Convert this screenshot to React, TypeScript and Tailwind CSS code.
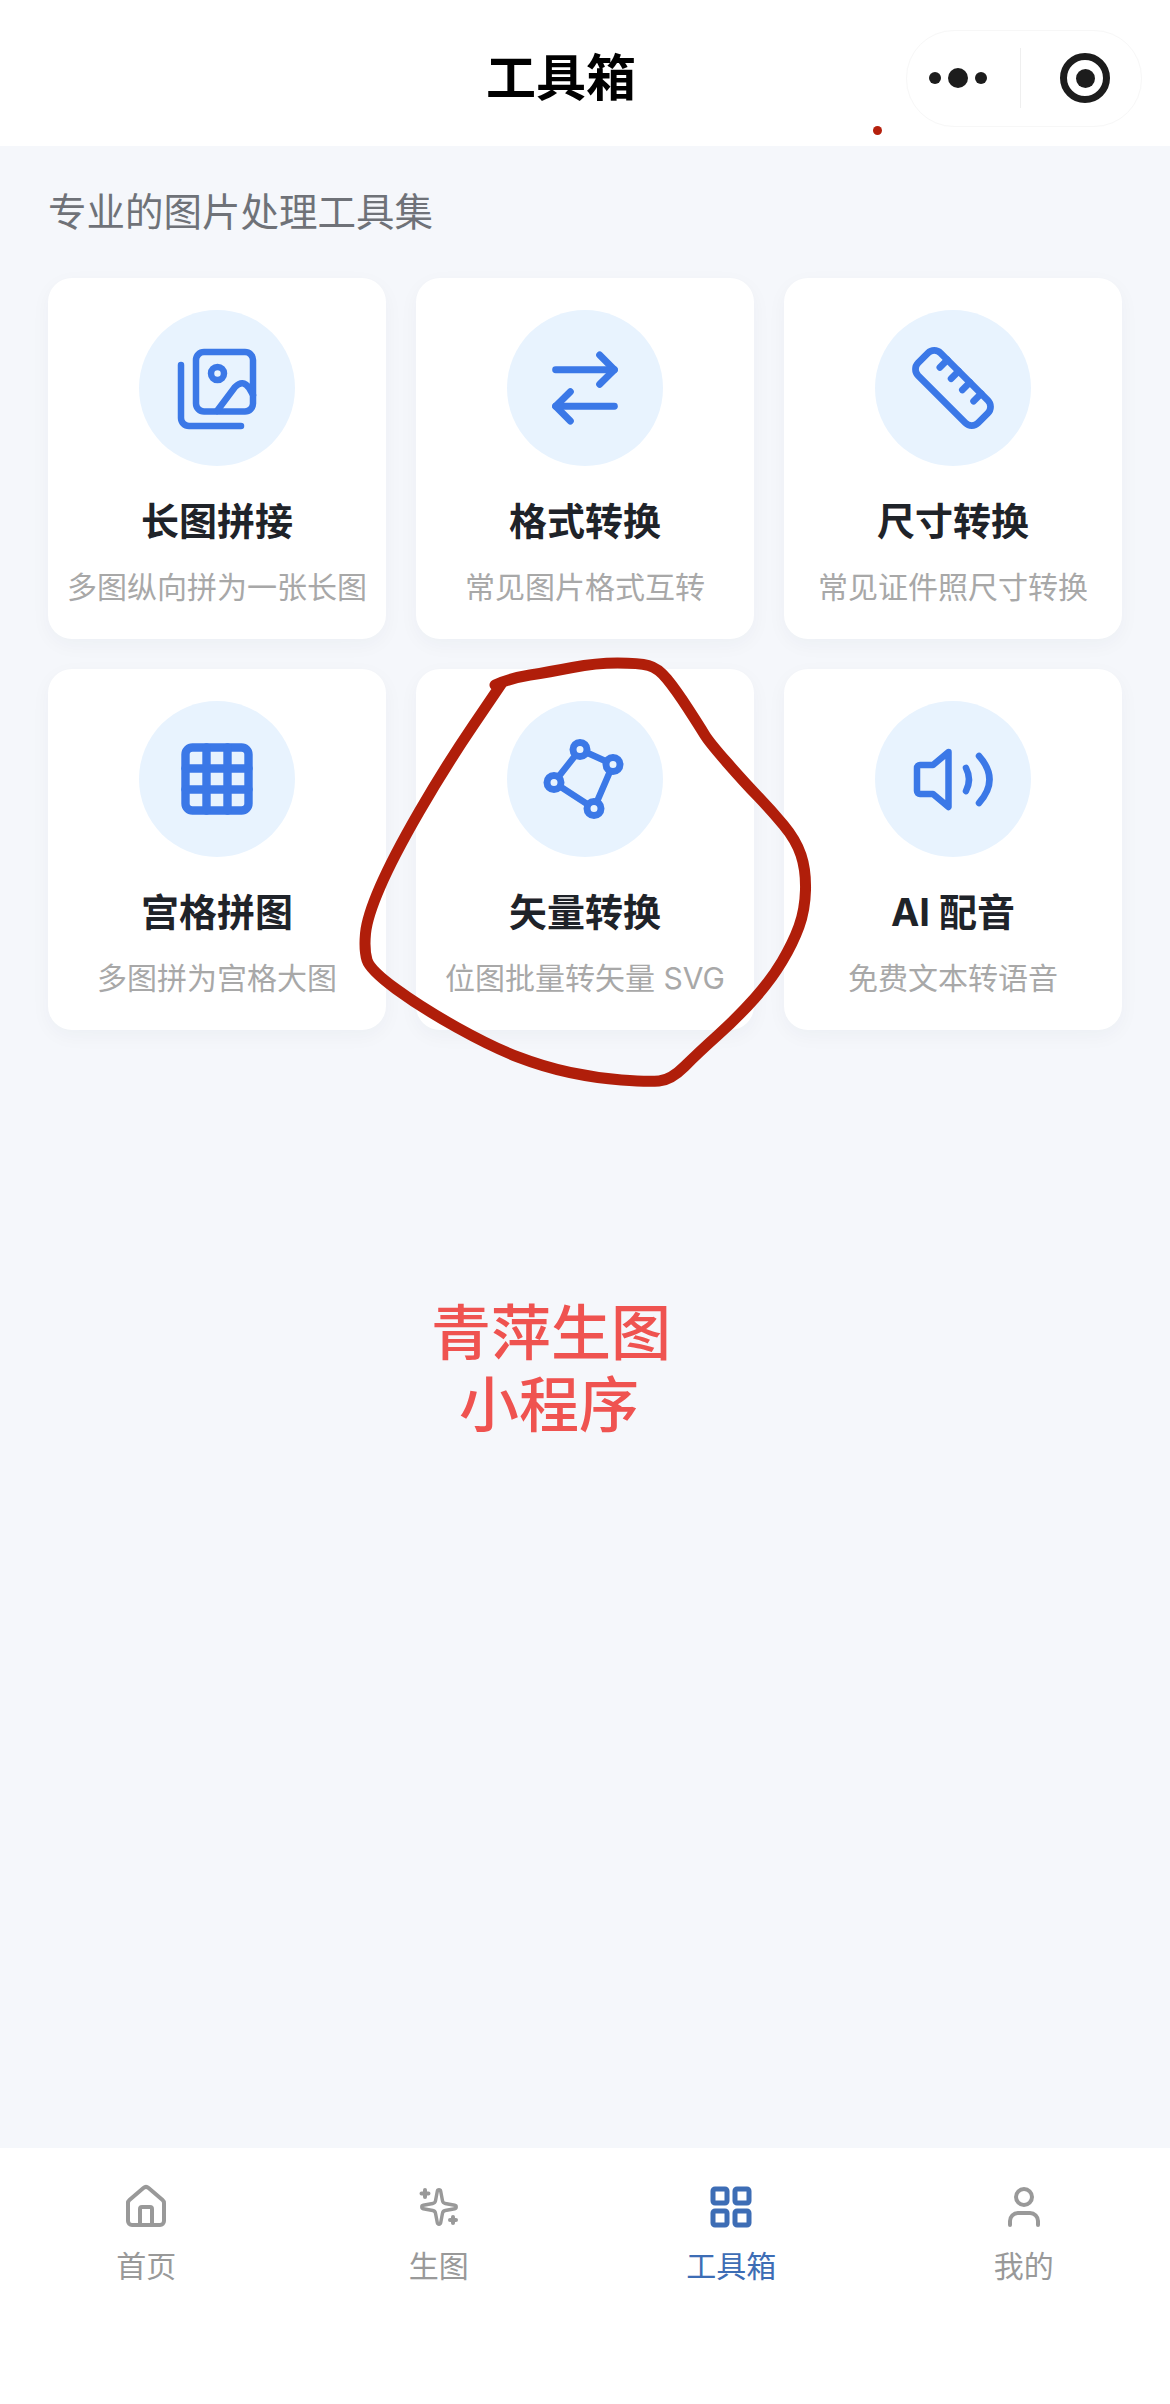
import { ArrowRightLeft, Grid3x3, House, LayoutGrid, Ruler, User } from "lucide-react";
import type { ReactNode } from "react";

const circlePoints: [number, number][] = [
  [495, 685], [511, 678], [549, 672], [596, 663], [639, 663], [658, 668], [676, 690], [700, 727], [709, 742], [745, 783],
  [771, 810], [796, 840], [806, 870], [805, 910], [793, 943], [771, 980], [738, 1017], [698, 1053], [671, 1080], [647, 1082],
  [596, 1078], [544, 1067], [492, 1047], [422, 1008], [370, 970], [364, 950], [367, 917], [393, 857], [445, 767], [502, 683],
];

function smooth(points: [number, number][]) {
  let d = `M${points[0][0]} ${points[0][1]}`;
  for (let i = 1; i < points.length - 1; i++) {
    const [x, y] = points[i];
    const [nx, ny] = points[i + 1];
    d += ` Q${x} ${y} ${(x + nx) / 2} ${(y + ny) / 2}`;
  }
  const last = points[points.length - 1];
  return `${d} L${last[0]} ${last[1]}`;
}

function StackIcon() {
  return (
    <svg width="84" height="84" viewBox="0 0 84 84" fill="none" stroke="#3b78e7" strokeWidth="6.500" strokeLinecap="round" strokeLinejoin="round">
      <rect x="21" y="6" width="57" height="59.500" rx="8" />
      <path d="M6 19v53a8 8 0 0 0 8 8h52" />
      <circle cx="42.500" cy="27.500" r="6.500" />
      <path d="M42 65 60 41q8-8 14 1l4 7" />
    </svg>
  );
}

function VectorIcon() {
  const nodes = [[37, 12.5], [70, 27.5], [51, 71.5], [11, 45.5]];
  return (
    <svg width="84" height="84" viewBox="0 0 84 84" fill="none" stroke="#3b78e7" strokeWidth="7">
      <path d="M37 12.5 70 27.5 51 71.5 11 45.5Z" strokeWidth="6.5" strokeLinejoin="round" />
      {nodes.map(([cx, cy]) => (
        <circle key={cx} cx={cx} cy={cy} r="7" fill="#e8f3fe" />
      ))}
    </svg>
  );
}

function SpeakerIcon() {
  return (
    <svg width="84" height="84" viewBox="0 0 84 84" fill="none" stroke="#3b78e7" strokeWidth="6.5" strokeLinecap="round" strokeLinejoin="round">
      <path d="M37.5 15 22 28H9a3 3 0 0 0-3 3v23a3 3 0 0 0 3 3h13l15.500 13Z" />
      <path d="M55 31Q61 42.500 55 54" />
      <path d="M68 19Q89 42.500 68 66" />
    </svg>
  );
}

function SparkIcon() {
  return (
    <svg width="48" height="48" viewBox="0 0 24 24" fill="none" stroke="#999999" strokeWidth="2" strokeLinecap="round" strokeLinejoin="round">
      <path d="M11.017 2.814a1 1 0 0 1 1.966 0l1.051 5.558a2 2 0 0 0 1.594 1.594l5.558 1.051a1 1 0 0 1 0 1.966l-5.558 1.051a2 2 0 0 0-1.594 1.594l-1.051 5.558a1 1 0 0 1-1.966 0l-1.051-5.558a2 2 0 0 0-1.594-1.594l-5.558-1.051a1 1 0 0 1 0-1.966l5.558-1.051a2 2 0 0 0 1.594-1.594z" transform="translate(12 12) scale(0.86) translate(-12 -12)" />
      <path d="M5 3.500v3.500M3.250 5.250h3.500M19 17v3M17.500 18.500h3" />
    </svg>
  );
}

const tools: { icon: ReactNode; title: string; desc: string }[] = [
  { icon: <StackIcon />, title: "长图拼接", desc: "多图纵向拼为一张长图" },
  { icon: <ArrowRightLeft size={88} color="#3b78e7" strokeWidth={1.9} />, title: "格式转换", desc: "常见图片格式互转" },
  { icon: <Ruler size={90} color="#3b78e7" strokeWidth={1.8} />, title: "尺寸转换", desc: "常见证件照尺寸转换" },
  { icon: <Grid3x3 size={84} color="#3b78e7" strokeWidth={2.4} />, title: "宫格拼图", desc: "多图拼为宫格大图" },
  { icon: <VectorIcon />, title: "矢量转换", desc: "位图批量转矢量 SVG" },
  { icon: <SpeakerIcon />, title: "AI 配音", desc: "免费文本转语音" },
];

const tabs: { icon: ReactNode; label: string; active?: boolean }[] = [
  { icon: <House size={48} color="#999999" strokeWidth={2} />, label: "首页" },
  { icon: <SparkIcon />, label: "生图" },
  { icon: <LayoutGrid size={48} color="#3d6db5" strokeWidth={2.5} />, label: "工具箱", active: true },
  { icon: <User size={48} color="#999999" strokeWidth={2} />, label: "我的" },
];

export default function App() {
  return (
    <div className="relative flex h-[2404px] w-[1170px] flex-col overflow-hidden bg-[#f5f7fb] font-['Inter','Noto_Sans_CJK_SC',sans-serif]">
      <header className="flex h-[146px] shrink-0 items-center bg-white">
        <h1 className="ml-[486px] pt-[10px] text-[50px] leading-[60px] font-bold text-black">工具箱</h1>
        <div className="relative mr-[28px] ml-auto flex h-[97px] w-[236px] translate-y-[5px] items-center rounded-[48px] border border-[#f7f7f7] bg-white">
          <div className="flex w-[113px] items-center justify-center gap-[7px] pr-[11px]">
            <span className="h-[12px] w-[12px] rounded-full bg-[#1c1c1c]" />
            <span className="h-[20px] w-[20px] rounded-full bg-[#1c1c1c]" />
            <span className="h-[12px] w-[12px] rounded-full bg-[#1c1c1c]" />
          </div>
          <div className="h-[60px] w-px bg-[#efefef]" />
          <div className="flex flex-1 items-center justify-center pl-[8px]">
            <div className="flex h-[50px] w-[50px] items-center justify-center rounded-full border-[7px] border-[#1c1c1c]">
              <span className="h-[19px] w-[19px] rounded-full bg-[#1c1c1c]" />
            </div>
          </div>
        </div>
      </header>

      <main className="flex-1 px-[48px] pt-[36px]">
        <p className="text-[38.5px] leading-[60px] text-[#6f7278]">专业的图片处理工具集</p>
        <div className="mt-[36px] grid w-[1074px] grid-cols-3 gap-x-[30px] gap-y-[30px]">
          {tools.map((tool) => (
            <div
              key={tool.title}
              className="flex h-[361px] flex-col items-center rounded-[24px] bg-white pt-[32px] shadow-[0_6px_20px_rgba(30,40,70,0.04)]"
            >
              <div className="flex h-[156px] w-[156px] items-center justify-center rounded-full bg-[#e8f3fe]">{tool.icon}</div>
              <h2 className="mt-[30px] text-[38px] leading-[50px] font-bold text-[#1f2329]">{tool.title}</h2>
              <p className="mt-[21px] text-[30px] leading-[40px] whitespace-nowrap text-[#a8a8a8]">{tool.desc}</p>
            </div>
          ))}
        </div>
        <div className="mt-[267px] ml-[288px] w-[430px] text-center text-[60px] leading-[72px] font-medium text-[#ef5350]">
          <p>青萍生图</p>
          <p className="pr-[4px]">小程序</p>
        </div>
      </main>

      <nav className="grid h-[256px] shrink-0 grid-cols-4 bg-white pt-[35px]">
        {tabs.map((tab) => (
          <div key={tab.label} className="flex flex-col items-center">
            {tab.icon}
            <span className={`mt-[15px] text-[30px] leading-[40px] ${tab.active ? "text-[#3d6db5]" : "text-[#999999]"}`}>{tab.label}</span>
          </div>
        ))}
      </nav>

      <span className="absolute top-[126px] left-[873px] h-[9px] w-[9px] rounded-full bg-[#b5200d]" />
      <svg className="pointer-events-none absolute top-0 left-0" width="1170" height="2404" viewBox="0 0 1170 2404" fill="none">
        <path d={smooth(circlePoints)} stroke="#b01e0a" strokeWidth="11" strokeLinecap="round" strokeLinejoin="round" />
      </svg>
    </div>
  );
}
